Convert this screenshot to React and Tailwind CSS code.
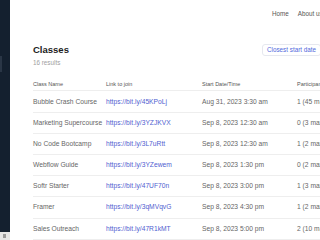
import React from 'react'

const rows = [
  { name: 'Bubble Crash Course', link: 'https://bit.ly/45KPoLj', date: 'Aug 31, 2023 3:30 am', part: '1 (45 max)' },
  { name: 'Marketing Supercourse', link: 'https://bit.ly/3YZJKVX', date: 'Sep 8, 2023 12:30 am', part: '0 (3 max)' },
  { name: 'No Code Bootcamp', link: 'https://bit.ly/3L7uRtt', date: 'Sep 8, 2023 12:30 am', part: '1 (2 max)' },
  { name: 'Webflow Guide', link: 'https://bit.ly/3YZewem', date: 'Sep 8, 2023 1:30 pm', part: '0 (2 max)' },
  { name: 'Softr Starter', link: 'https://bit.ly/47UF70n', date: 'Sep 8, 2023 3:00 pm', part: '1 (3 max)' },
  { name: 'Framer', link: 'https://bit.ly/3qMVqvG', date: 'Sep 8, 2023 4:30 pm', part: '1 (2 max)' },
  { name: 'Sales Outreach', link: 'https://bit.ly/47R1kMT', date: 'Sep 8, 2023 5:00 pm', part: '2 (10 max)' },
]

const App = () => {
  return (
    <div className='w-[320px] h-[240px] overflow-hidden flex bg-white' style={{ fontFamily: '"Liberation Sans", Arial, sans-serif' }}>
      {/* sidebar */}
      <div className='w-[10px] shrink-0 h-full bg-[#14202f] flex flex-col'>
        <div className='h-[56px]'></div>
        <div className='w-[2px] h-[16px] bg-[#2a3646]'></div>
        <div className='flex-1'></div>
        <div className='h-[8px] bg-[#e5e5e5] flex items-center pl-[3px]'>
          <div className='w-[3px] h-[4px] bg-[#9a9a9a]'></div>
        </div>
      </div>

      {/* main */}
      <div className='flex-1 min-w-0 flex flex-col overflow-hidden'>
        <div className='h-[28px] flex items-center pl-[262px] gap-[9px] text-[6.3px] text-[#555] whitespace-nowrap'>
          <span>Home</span>
          <span>About us</span>
        </div>

        <div className='pl-[23px] flex items-start pt-[16px]'>
          <div className='w-[229px] shrink-0 flex flex-col'>
            <h1 className='text-[9.5px] font-bold text-[#222] leading-[12px]'>Classes</h1>
            <p className='text-[6.3px] text-[#a0a0a0] mt-[2px]'>16 results</p>
          </div>
          <div className='shrink-0 border border-[#e6e8ef] rounded-[3px] h-[12px] flex items-center px-[4px] text-[6.3px] text-[#5068dc] whitespace-nowrap'>
            Closest start date
          </div>
        </div>

        <div className='pl-[23px] mt-[10px]'>
          <div className='flex h-[14px] items-center text-[5.5px] text-[#555] border-b border-[#eeeeee] whitespace-nowrap'>
            <div className='w-[73px] shrink-0'>Class Name</div>
            <div className='w-[96px] shrink-0'>Link to join</div>
            <div className='w-[95px] shrink-0'>Start Date/Time</div>
            <div className='shrink-0'>Participants</div>
          </div>
          {rows.map((r) => (
            <div key={r.name} className='flex h-[21.2px] items-center text-[6.7px] border-b border-[#eeeeee] whitespace-nowrap'>
              <div className='w-[73px] shrink-0 text-[#666]'>{r.name}</div>
              <div className='w-[96px] shrink-0 text-[#5060d0]'>{r.link}</div>
              <div className='w-[95px] shrink-0 text-[#666]'>{r.date}</div>
              <div className='shrink-0 text-[#666]'>{r.part}</div>
            </div>
          ))}
        </div>
      </div>
    </div>
  )
}

export default App
